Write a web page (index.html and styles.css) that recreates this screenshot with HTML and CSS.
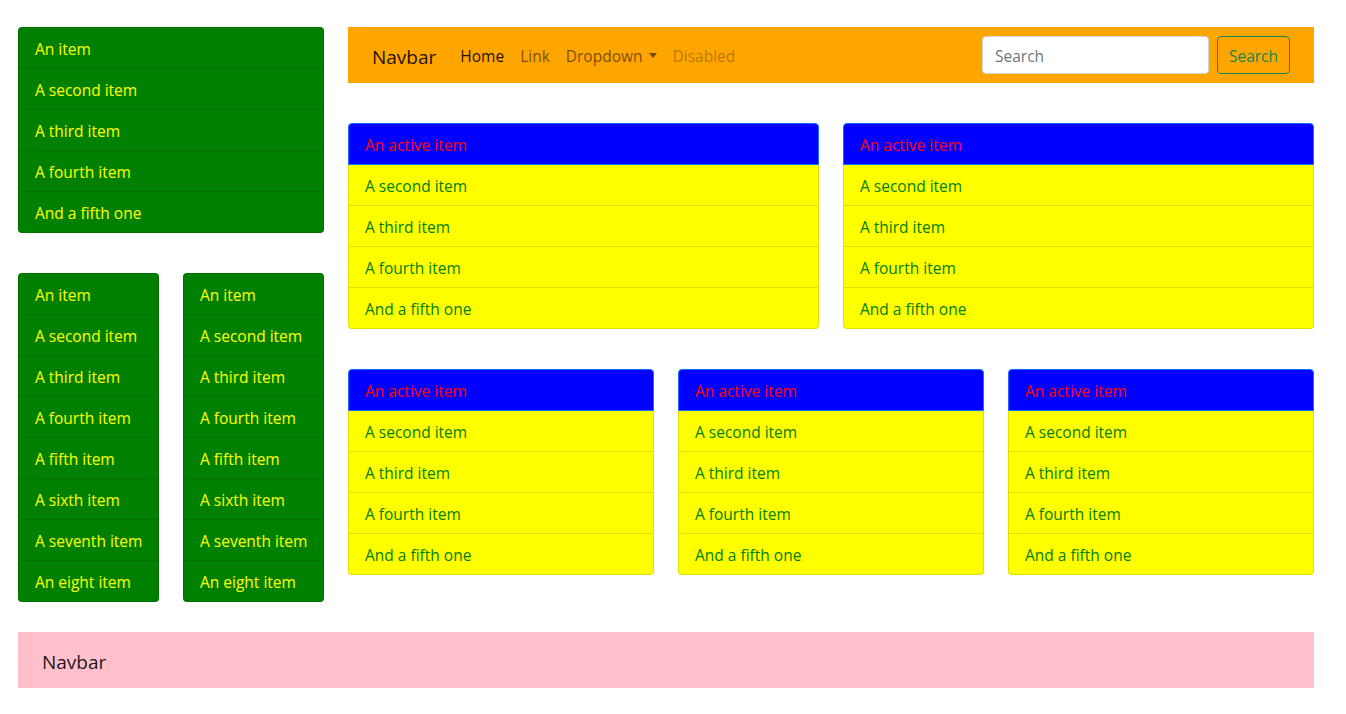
FILE: index.html
```html
<!DOCTYPE html>
<html lang="en">
<head>
<meta charset="utf-8">
<title>Lists</title>
<link rel="stylesheet" href="styles.css">
</head>
<body>
<div class="page">
  <div class="main-row">
    <div class="col-left">
      <ul class="list green">
        <li>An item</li>
        <li>A second item</li>
        <li>A third item</li>
        <li>A fourth item</li>
        <li>And a fifth one</li>
      </ul>
      <div class="pair">
        <ul class="list green">
          <li>An item</li>
          <li>A second item</li>
          <li>A third item</li>
          <li>A fourth item</li>
          <li>A fifth item</li>
          <li>A sixth item</li>
          <li>A seventh item</li>
          <li>An eight item</li>
        </ul>
        <ul class="list green">
          <li>An item</li>
          <li>A second item</li>
          <li>A third item</li>
          <li>A fourth item</li>
          <li>A fifth item</li>
          <li>A sixth item</li>
          <li>A seventh item</li>
          <li>An eight item</li>
        </ul>
      </div>
    </div>
    <div class="col-right">
      <nav class="navbar orange">
        <a class="brand" href="#">Navbar</a>
        <ul class="nav">
          <li><a class="nav-link active" href="#">Home</a></li>
          <li><a class="nav-link" href="#">Link</a></li>
          <li><a class="nav-link dropdown" href="#">Dropdown</a></li>
          <li><a class="nav-link disabled" href="#">Disabled</a></li>
        </ul>
        <form class="search">
          <input class="search-input" type="search" placeholder="Search">
          <button class="search-btn" type="button">Search</button>
        </form>
      </nav>
      <div class="grid two">
        <ul class="list yellow">
          <li class="active">An active item</li>
          <li>A second item</li>
          <li>A third item</li>
          <li>A fourth item</li>
          <li>And a fifth one</li>
        </ul>
        <ul class="list yellow">
          <li class="active">An active item</li>
          <li>A second item</li>
          <li>A third item</li>
          <li>A fourth item</li>
          <li>And a fifth one</li>
        </ul>
      </div>
      <div class="grid three">
        <ul class="list yellow">
          <li class="active">An active item</li>
          <li>A second item</li>
          <li>A third item</li>
          <li>A fourth item</li>
          <li>And a fifth one</li>
        </ul>
        <ul class="list yellow">
          <li class="active">An active item</li>
          <li>A second item</li>
          <li>A third item</li>
          <li>A fourth item</li>
          <li>And a fifth one</li>
        </ul>
        <ul class="list yellow">
          <li class="active">An active item</li>
          <li>A second item</li>
          <li>A third item</li>
          <li>A fourth item</li>
          <li>And a fifth one</li>
        </ul>
      </div>
    </div>
  </div>
  <nav class="navbar pink">
    <a class="brand" href="#">Navbar</a>
  </nav>
</div>
</body>
</html>
```

FILE: styles.css
```css
* { box-sizing: border-box; }

html, body {
  margin: 0;
  padding: 0;
  background: #fff;
}

body {
  font-family: "Open Sans", "Noto Sans", "Liberation Sans", sans-serif;
  font-size: 15.5px;
  line-height: 24px;
  color: #212529;
}

.page {
  width: 1296px;
  margin: 27px 0 0 18px;
}

.main-row {
  display: grid;
  grid-template-columns: 306px 966px;
  column-gap: 24px;
  align-items: start;
}

.col-left,
.col-right {
  display: flex;
  flex-direction: column;
}

.pair {
  display: grid;
  grid-template-columns: 141px 141px;
  column-gap: 24px;
  margin-top: 40px;
}

.grid {
  display: grid;
  column-gap: 24px;
  margin-top: 40px;
}

.grid.two { grid-template-columns: 471px 471px; }
.grid.three { grid-template-columns: 306px 306px 306px; }

/* list groups */
.list {
  list-style: none;
  margin: 0;
  padding: 0;
  border-radius: 4px;
}

.list li {
  padding: 9px 16px 7px;
  border: 1px solid rgba(0, 0, 0, 0.125);
  border-top-width: 0;
  white-space: nowrap;
}

.list li:first-child {
  border-top-width: 1px;
  border-top-left-radius: 4px;
  border-top-right-radius: 4px;
}

.list li:last-child {
  border-bottom-left-radius: 4px;
  border-bottom-right-radius: 4px;
}

.list.green li {
  background: #008000;
  color: #ffff00;
}

.list.yellow li {
  background: #ffff00;
  color: #008000;
}

.list.yellow li.active {
  background: #0000ff;
  color: #ff0000;
  border-color: #0d6efd;
}

/* navbars */
.navbar {
  display: flex;
  align-items: center;
  height: 56px;
  padding: 8px 24px;
}

.navbar.orange { background: #ffa500; }

.navbar.pink {
  background: #ffc0cb;
  margin-top: 30px;
}

.brand {
  font-size: 19px;
  line-height: 30px;
  padding: 7px 0 3px;
  margin-right: 16px;
  color: rgba(0, 0, 0, 0.9);
  text-decoration: none;
}

.nav {
  display: flex;
  list-style: none;
  margin: 0;
  padding: 0;
}

.nav-link {
  display: block;
  padding: 9px 8px 7px;
  color: rgba(0, 0, 0, 0.55);
  text-decoration: none;
}

.nav-link.active { color: rgba(0, 0, 0, 0.9); }
.nav-link.disabled { color: rgba(0, 0, 0, 0.3); }

.nav-link.dropdown::after {
  content: "";
  display: inline-block;
  margin-left: 6px;
  vertical-align: 4px;
  border-top: 5px solid;
  border-left: 4.5px solid transparent;
  border-right: 4.5px solid transparent;
}

.search {
  display: flex;
  margin-left: auto;
}

.search-input {
  width: 227px;
  height: 38px;
  margin-right: 8px;
  padding: 7px 12px 5px;
  font: inherit;
  color: #212529;
  background: #fff;
  border: 1px solid #ced4da;
  border-radius: 4px;
}

.search-input::placeholder { color: #6c757d; }

.search-btn {
  height: 38px;
  width: 73px;
  padding: 7px 0 5px;
  font: inherit;
  color: #198754;
  background: transparent;
  border: 1px solid #198754;
  border-radius: 4px;
}
```
